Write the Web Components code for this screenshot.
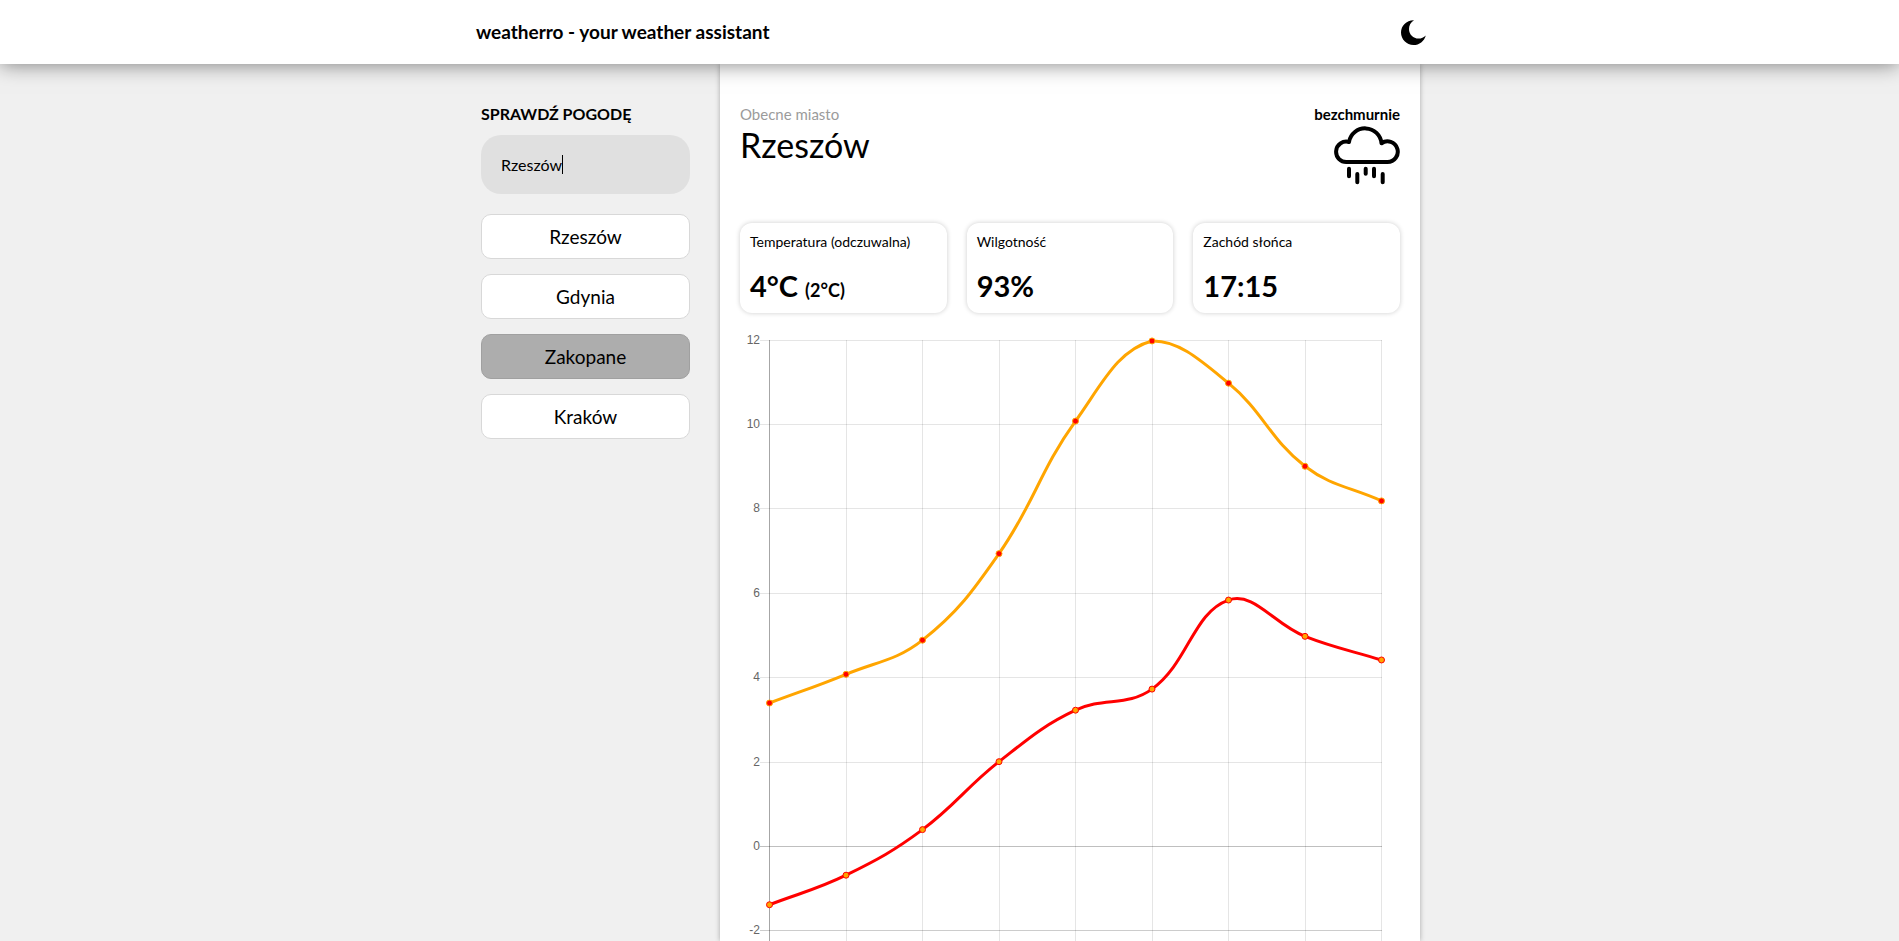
<!DOCTYPE html>
<html lang="pl">
<head>
<meta charset="utf-8">
<title>weatherro - your weather assistant</title>
<style>
body{margin:0;background:#f0f0f0;color:#000;font-family:Lato,sans-serif;font-size:16px;line-height:20px}
</style>
</head>
<body>
<weather-app></weather-app>
<script>
const define = (name, html, init) => customElements.define(name, class extends HTMLElement {
  constructor() {
    super();
    this.attachShadow({mode: 'open'}).innerHTML = `<style>*{box-sizing:border-box}</style>${html}`;
  }
  connectedCallback() { if (init) init(this, this.shadowRoot); }
});

define('app-header', `<style>
:host{display:block;position:relative;z-index:1;background:#fff;box-shadow:0 0 20px rgba(0,0,0,.5)}
.bar{max-width:953px;height:64px;margin:0 auto;padding-left:3px;display:flex;align-items:center;justify-content:space-between}
h1{margin:0;font-size:19px;line-height:24px;font-weight:700}
button{display:flex;border:0;padding:0;background:none}
</style>
<header class="bar"><h1><slot></slot></h1>
<button aria-label="Tryb ciemny"><svg width="25" height="25" viewBox="0 0 25 25"><path d="M13 .2C5.500 0 0 5.700 0 12.600 0 19.500 5.600 25 12.500 25c5.800 0 10.700-3.900 12.300-9.600-2 2.100-4.500 3.100-7.200 3.100-5.400 0-9.600-4.200-9.600-9.600C8 5.300 9.700 2.400 13 .2z"/></svg></button></header>`);

define('city-button', `<style>
:host{display:block}
button{display:block;width:100%;height:45px;padding:0;border:1px solid #d8d8d8;border-radius:10px;background:#fff;color:#000;font:19px/24px Lato,sans-serif}
:host([active]) button{background:#adadad;border-color:#a0a0a0}
</style><button><slot></slot></button>`);

define('city-search', `<style>
:host{display:block}
label{display:block;font-weight:700}
.field{display:flex;align-items:center;height:59px;margin:11px 0 20px;padding:0 20px;border-radius:20px;background:#e0e0e0;position:relative}
input{width:100%;border:0;padding:0;outline:0;background:none;color:#000;font:16px/20px Lato,sans-serif}
.caret{position:absolute;left:81px;top:20px;width:1px;height:19px;background:#000}
nav{display:grid;gap:15px}
</style>
<label for="city">SPRAWDŹ POGODĘ</label>
<div class="field"><input id="city" type="text" value="Rzeszów"><span class="caret"></span></div>
<nav><city-button>Rzeszów</city-button><city-button>Gdynia</city-button><city-button active>Zakopane</city-button><city-button>Kraków</city-button></nav>`);

define('current-weather', `<style>
:host{display:flex;justify-content:space-between;font-size:15px}
.label{color:#9b9b9b}
h2{margin:0;font-size:34px;line-height:42px;font-weight:400}
.sky{display:flex;flex-direction:column;align-items:flex-end;font-weight:700}
svg{display:block}
</style>
<div><div class="label">Obecne miasto</div><h2>Rzeszów</h2></div>
<div class="sky"><span>bezchmurnie</span>
<svg width="66" height="64" viewBox="0 0 66 64" fill="none" stroke="#000" stroke-width="4" stroke-linecap="round" stroke-linejoin="round"><path d="M13.200 38A10.200 10.200 0 1 1 15 18A16.400 16.400 0 0 1 47.500 19.300A10.300 10.300 0 1 1 53.500 38z"/><path d="M15 44.700v7.600M23.300 50v8.300M31.700 44.700v5M40 44.700v7.600M48.700 50v8.300"/></svg></div>`);

define('stat-card', `<style>
:host{display:flex;flex-direction:column;height:90px;padding:9px 10px;border-radius:12px;background:#fff;box-shadow:0 0 5px rgba(0,0,0,.2)}
.name{font-size:14px;line-height:20px}
.value{margin-top:16px;font-size:29px;line-height:36px;font-weight:700}
::slotted(small){font-size:18px}
</style><div class="name"><slot name="label"></slot></div><div class="value"><slot></slot></div>`);

define('forecast-chart', `<style>
:host{display:block}
svg{display:block;width:100%}
text{font:12px "Liberation Sans",Arial,sans-serif;fill:#666;text-anchor:end}
</style><svg viewBox="0 0 660 614" role="img" aria-label="Prognoza temperatury"></svg>`, (host, root) => {
  const svg = root.querySelector('svg');
  const left = 29.5, right = 641.5, top = 13.1, bottom = 603.9, step = (right - left) / 8;
  const py = v => top + (12 - v) * (bottom - top) / 14;
  let out = '';
  for (let v = 12; v >= -2; v -= 2) {
    const y = Math.floor(py(v)) + .5;
    out += `<path d="M20 ${y}H642" stroke="rgba(0,0,0,${v === 0 ? .25 : v === -2 ? .2 : .1})"/><text x="20" y="${y + 3.5}">${v}</text>`;
  }
  for (let i = 0; i < 9; i++) {
    const x = Math.floor(left + i * step) + .5;
    out += `<path d="M${x} 13V614" stroke="rgba(0,0,0,${i ? .1 : .35})"/>`;
  }
  // Smoothed line whose control points follow the distance to each neighbour.
  const line = (values, color, fill) => {
    const p = values.map((v, i) => [left + i * step, py(v)]);
    const ctl = p.map((c, i) => {
      const a = p[i - 1] || c, b = p[i + 1] || c;
      const d1 = Math.hypot(c[0] - a[0], c[1] - a[1]), d2 = Math.hypot(b[0] - c[0], b[1] - c[1]);
      const f1 = .4 * d1 / (d1 + d2), f2 = .4 * d2 / (d1 + d2);
      const clamp = y => Math.max(top, Math.min(bottom, y));
      return [[c[0] - f1 * (b[0] - a[0]), clamp(c[1] - f1 * (b[1] - a[1]))], [c[0] + f2 * (b[0] - a[0]), clamp(c[1] + f2 * (b[1] - a[1]))]];
    });
    let d = `M${p[0]}`;
    for (let i = 1; i < p.length; i++) d += `C${ctl[i - 1][1]} ${ctl[i][0]} ${p[i]}`;
    return `<path d="${d}" fill="none" stroke="${color}" stroke-width="3"/>` +
      p.map(c => `<circle cx="${c[0]}" cy="${c[1]}" r="3" fill="${fill}" stroke="${color}"/>`).join('');
  };
  out += line([-1.38, -.68, .4, 2.01, 3.23, 3.73, 5.84, 4.98, 4.42], 'red', 'orange');
  out += line([3.4, 4.08, 4.89, 6.94, 10.08, 11.98, 10.98, 9.01, 8.19], 'orange', 'red');
  svg.innerHTML = out;
});

define('weather-app', `<style>
:host{display:flex;flex-direction:column;min-height:100vh}
main{flex:1;width:100%;max-width:941px;margin:0 auto;padding-left:2px;display:grid;grid-template-columns:209px minmax(0,1fr);gap:30px}
city-search{padding-top:40px}
section{padding:40px 20px 0;background:#fff;box-shadow:0 0 5px rgba(0,0,0,.3)}
.stats{display:grid;grid-template-columns:repeat(3,minmax(0,1fr));gap:20px;margin:35px 0 14px}
</style>
<app-header>weatherro - your weather assistant</app-header>
<main><city-search></city-search>
<section><current-weather></current-weather>
<div class="stats">
<stat-card><span slot="label">Temperatura (odczuwalna)</span>4°C <small>(2°C)</small></stat-card>
<stat-card><span slot="label">Wilgotność</span>93%</stat-card>
<stat-card><span slot="label">Zachód słońca</span>17:15</stat-card>
</div>
<forecast-chart></forecast-chart></section></main>`);
</script>
</body>
</html>
